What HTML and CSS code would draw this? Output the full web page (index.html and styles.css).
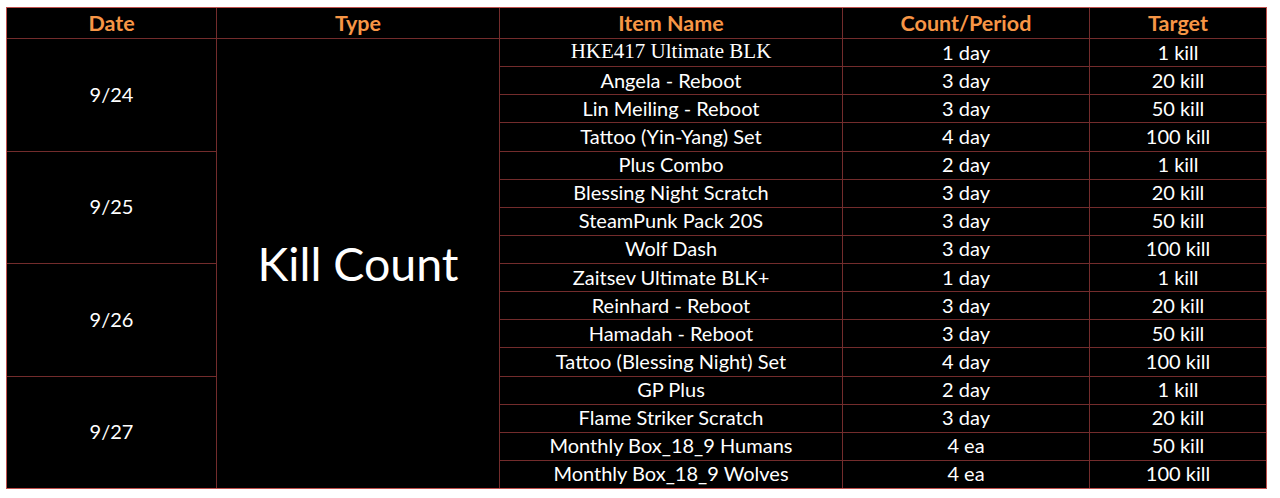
FILE: index.html
```html
<!DOCTYPE html>
<html>
<head>
<meta charset="utf-8">
<link rel="stylesheet" href="styles.css">
</head>
<body>
<div class="sheet">
  <div class="hd">Date</div>
  <div class="hd">Type</div>
  <div class="hd">Item Name</div>
  <div class="hd">Count/Period</div>
  <div class="hd">Target</div>

  <div class="date d1">9/24</div>
  <div class="type">Kill Count</div>
  <div class="c serif">HKE417 Ultimate BLK</div><div class="c">1 day</div><div class="c">1 kill</div>
  <div class="c">Angela - Reboot</div><div class="c">3 day</div><div class="c">20 kill</div>
  <div class="c">Lin Meiling - Reboot</div><div class="c">3 day</div><div class="c">50 kill</div>
  <div class="c">Tattoo (Yin-Yang) Set</div><div class="c">4 day</div><div class="c">100 kill</div>

  <div class="date d2">9/25</div>
  <div class="c">Plus Combo</div><div class="c">2 day</div><div class="c">1 kill</div>
  <div class="c">Blessing Night Scratch</div><div class="c">3 day</div><div class="c">20 kill</div>
  <div class="c">SteamPunk Pack 20S</div><div class="c">3 day</div><div class="c">50 kill</div>
  <div class="c">Wolf Dash</div><div class="c">3 day</div><div class="c">100 kill</div>

  <div class="date d3">9/26</div>
  <div class="c">Zaitsev Ultimate BLK+</div><div class="c">1 day</div><div class="c">1 kill</div>
  <div class="c">Reinhard - Reboot</div><div class="c">3 day</div><div class="c">20 kill</div>
  <div class="c">Hamadah - Reboot</div><div class="c">3 day</div><div class="c">50 kill</div>
  <div class="c">Tattoo (Blessing Night) Set</div><div class="c">4 day</div><div class="c">100 kill</div>

  <div class="date d4">9/27</div>
  <div class="c">GP Plus</div><div class="c">2 day</div><div class="c">1 kill</div>
  <div class="c">Flame Striker Scratch</div><div class="c">3 day</div><div class="c">20 kill</div>
  <div class="c">Monthly Box_18_9 Humans</div><div class="c">4 ea</div><div class="c">50 kill</div>
  <div class="c">Monthly Box_18_9 Wolves</div><div class="c">4 ea</div><div class="c">100 kill</div>
</div>
</body>
</html>
```
FILE: styles.css
```css
html, body {
  margin: 0;
  background: #ffffff;
}
body {
  padding: 7px 0 0 6px;
  font-family: Lato, "Open Sans", sans-serif;
}
.sheet {
  display: grid;
  grid-template-columns: 209px 282px 342px 246px 176px;
  grid-template-rows: 30px repeat(16, 1fr);
  gap: 1px;
  width: 1261px;
  height: 482px;
  box-sizing: border-box;
  border: 1px solid #c0504d;
  background: #732c2c;
}
.sheet > div {
  background: #000000;
  color: #ffffff;
  display: flex;
  align-items: center;
  justify-content: center;
  white-space: nowrap;
  padding-bottom: 2px;
  box-sizing: border-box;
}
.sheet > .hd {
  color: #f79646;
  font-weight: 700;
  font-size: 21.5px;
  padding-bottom: 0;
}
.c {
  font-size: 20px;
}
.serif {
  font-family: "Liberation Serif", serif;
  font-size: 21px;
}
.date {
  grid-column: 1;
  font-size: 20px;
}
.d1 { grid-row: 2 / span 4; }
.d2 { grid-row: 6 / span 4; }
.d3 { grid-row: 10 / span 4; }
.d4 { grid-row: 14 / span 4; }
.type {
  grid-column: 2;
  grid-row: 2 / span 16;
  font-size: 46.5px;
}
```
